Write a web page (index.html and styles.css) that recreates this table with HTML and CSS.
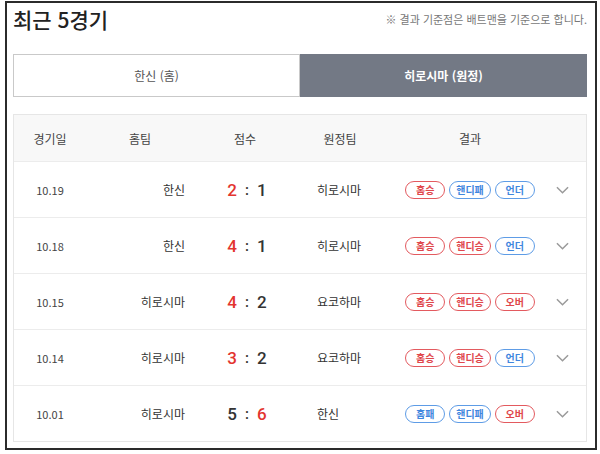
FILE: index.html
```html
<!DOCTYPE html>
<html lang="ko">
<head>
<meta charset="utf-8">
<link rel="stylesheet" href="styles.css">
</head>
<body>
<div class="frame">
  <div class="head">
    <h1 class="title">최근 5경기</h1>
    <p class="note">※ 결과 기준점은 배트맨을 기준으로 합니다.</p>
  </div>
  <div class="tabs">
    <div class="tab">한신 (홈)</div>
    <div class="tab tab-on">히로시마 (원정)</div>
  </div>
  <div class="table">
    <div class="row row-head">
      <div class="c c1">경기일</div>
      <div class="c c2h">홈팀</div>
      <div class="c c3">점수</div>
      <div class="c c4h">원정팀</div>
      <div class="c c5">결과</div>
      <div class="c c6"></div>
    </div>

    <div class="row">
      <div class="c c1 date">10.19</div>
      <div class="c c2">한신</div>
      <div class="c c3 score"><span class="win">2</span><span class="colon">:</span><span>1</span></div>
      <div class="c c4">히로시마</div>
      <div class="c c5"><span class="b red">홈승</span><span class="b blue">핸디패</span><span class="b blue">언더</span></div>
      <div class="c c6"><svg class="chev" viewBox="0 0 14 8"><path d="M1 1l6 6 6-6"/></svg></div>
    </div>

    <div class="row">
      <div class="c c1 date">10.18</div>
      <div class="c c2">한신</div>
      <div class="c c3 score"><span class="win">4</span><span class="colon">:</span><span>1</span></div>
      <div class="c c4">히로시마</div>
      <div class="c c5"><span class="b red">홈승</span><span class="b red">핸디승</span><span class="b blue">언더</span></div>
      <div class="c c6"><svg class="chev" viewBox="0 0 14 8"><path d="M1 1l6 6 6-6"/></svg></div>
    </div>

    <div class="row">
      <div class="c c1 date">10.15</div>
      <div class="c c2">히로시마</div>
      <div class="c c3 score"><span class="win">4</span><span class="colon">:</span><span>2</span></div>
      <div class="c c4">요코하마</div>
      <div class="c c5"><span class="b red">홈승</span><span class="b red">핸디승</span><span class="b red">오버</span></div>
      <div class="c c6"><svg class="chev" viewBox="0 0 14 8"><path d="M1 1l6 6 6-6"/></svg></div>
    </div>

    <div class="row">
      <div class="c c1 date">10.14</div>
      <div class="c c2">히로시마</div>
      <div class="c c3 score"><span class="win">3</span><span class="colon">:</span><span>2</span></div>
      <div class="c c4">요코하마</div>
      <div class="c c5"><span class="b red">홈승</span><span class="b red">핸디승</span><span class="b blue">언더</span></div>
      <div class="c c6"><svg class="chev" viewBox="0 0 14 8"><path d="M1 1l6 6 6-6"/></svg></div>
    </div>

    <div class="row">
      <div class="c c1 date">10.01</div>
      <div class="c c2">히로시마</div>
      <div class="c c3 score"><span>5</span><span class="colon">:</span><span class="win">6</span></div>
      <div class="c c4">한신</div>
      <div class="c c5"><span class="b blue">홈패</span><span class="b blue">핸디패</span><span class="b red">오버</span></div>
      <div class="c c6"><svg class="chev" viewBox="0 0 14 8"><path d="M1 1l6 6 6-6"/></svg></div>
    </div>
  </div>
</div>
</body>
</html>
```

FILE: styles.css
```css
* { box-sizing: border-box; }
html, body { margin: 0; padding: 0; background: #fff; }
body {
  font-family: "Noto Sans CJK KR", "Noto Sans", sans-serif;
  color: #333;
}
.frame {
  margin: 1px 0 0 5px;
  width: 592px;
  height: 449px;
  border: 2px solid #2b2b2b;
  padding: 0 8px 0 6px;
}
.head {
  height: 51px;
  display: flex;
  justify-content: space-between;
  align-items: flex-start;
}
.title {
  margin: 0;
  padding-top: 2px;
  font-size: 21px;
  line-height: 28px;
  font-weight: 500;
  color: #222;
}
.note {
  margin: 0;
  padding-top: 8px;
  font-size: 11px;
  line-height: 16px;
  color: #777;
}
.tabs {
  display: flex;
  height: 43px;
}
.tab {
  flex: 1;
  display: flex;
  align-items: center;
  justify-content: center;
  font-size: 12px;
  color: #555;
  border: 1px solid #c9c9c9;
  background: #fff;
}
.tab-on {
  background: #737985;
  border-color: #737985;
  color: #fff;
  font-weight: 700;
}
.table {
  margin-top: 17px;
  border: 1px solid #e6e6e6;
}
.row {
  display: grid;
  grid-template-columns: 72px 108px 102px 88px 172px 30px;
  height: 56px;
  border-top: 1px solid #ececec;
  align-items: center;
  font-size: 12px;
  color: #333;
}
.row-head {
  height: 46px;
  border-top: 0;
  background: #f8f8f8;
  color: #444;
}
.c { text-align: center; }
.c2 { text-align: right; padding-right: 9px; }
.c4 { text-align: left; padding-left: 21px; }
.date { font-size: 11px; color: #444; }
.score {
  font-size: 17px;
  font-weight: 500;
  color: #333;
  font-family: "Roboto", "Noto Sans", sans-serif;
  padding-left: 4px;
}
.score .colon { margin: 0 8px; font-size: 15px; position: relative; top: -1px; }
.score .win { color: #e3352f; }
.c5 {
  display: flex;
  justify-content: center;
  gap: 4px;
}
.b {
  display: inline-flex;
  align-items: center;
  justify-content: center;
  min-width: 40px;
  height: 18px;
  padding: 0 6px;
  border-radius: 9px;
  border: 1.5px solid;
  font-size: 10px;
  font-weight: 700;
  line-height: 1;
  background: #fff;
}
.red { color: #e0474c; border-color: #e35a5f; }
.blue { color: #3f86de; border-color: #5e9ce6; }
.c6 { text-align: left; display: flex; align-items: center; }
.chev {
  width: 13px;
  height: 8px;
  fill: none;
  stroke: #9a9a9a;
  stroke-width: 1.6;
}
```
